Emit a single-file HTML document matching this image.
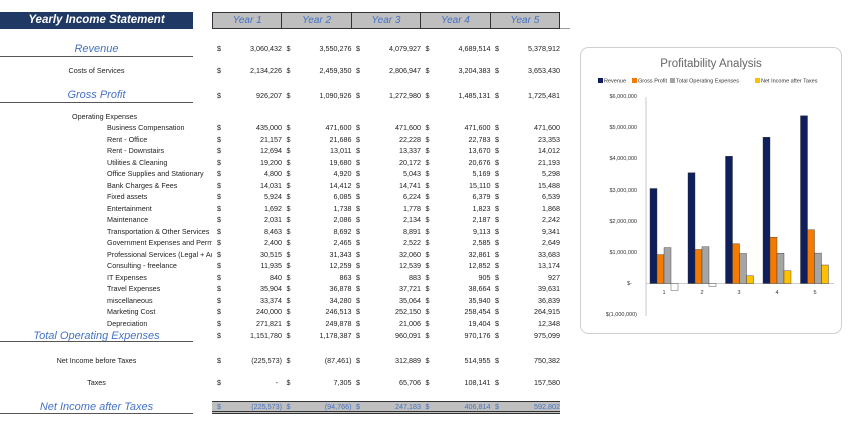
<!DOCTYPE html>
<html><head><meta charset="utf-8"><style>
*{margin:0;padding:0;box-sizing:border-box}
body{width:850px;height:440px;background:#fff;font-family:"Liberation Sans",sans-serif;position:relative;overflow:hidden;color:#222}
.r{position:absolute;left:0;width:570px;height:10px;line-height:10px;font-size:7.2px}
.r .l{position:absolute;left:107px;width:105px;white-space:nowrap;overflow:hidden}
.r .lc{position:absolute;left:0;width:193px;text-align:center}
.c{position:absolute;width:69px;height:10px}
.c b{font-weight:normal;position:absolute;left:3px}
.c i{font-style:normal;position:absolute;right:1px}
.c1{left:214px}.c2{left:283.5px}.c3{left:353px}.c4{left:422.5px}.c5{left:492px}
.big{font-style:italic;color:#4472c4;font-size:11px}
.ul{position:absolute;left:0;width:193px;height:1px;background:#555}
</style></head><body>
<div style="position:absolute;left:0;top:12px;width:193px;height:17px;background:#1f3864;color:#fff;font-style:italic;font-weight:bold;font-size:11.5px;line-height:17px;text-align:center">Yearly Income Statement</div>
<div style="position:absolute;left:212px;top:12px;width:348px;height:17px;background:#bfbfbf;border:1px solid #333;display:flex;color:#4472c4;font-style:italic;font-size:10px;line-height:15px">
<div style="flex:1;text-align:center;border-right:1px solid #333">Year 1</div><div style="flex:1;text-align:center;border-right:1px solid #333">Year 2</div><div style="flex:1;text-align:center;border-right:1px solid #333">Year 3</div><div style="flex:1;text-align:center;border-right:1px solid #333">Year 4</div><div style="flex:1;text-align:center">Year 5</div></div>
<div style="position:absolute;left:560px;top:28px;width:10px;height:1px;background:#999"></div>

<div class="r" style="top:43px;height:12px;line-height:12px"><span class="lc big">Revenue</span></div>
<div class="r" style="top:44px"><div class="c c1"><b>$</b><i>3,060,432</i></div><div class="c c2"><b>$</b><i>3,550,276</i></div><div class="c c3"><b>$</b><i>4,079,927</i></div><div class="c c4"><b>$</b><i>4,689,514</i></div><div class="c c5"><b>$</b><i>5,378,912</i></div></div>
<div class="ul" style="top:56px"></div>
<div class="r" style="top:66px"><span class="lc">Costs of Services</span><div class="c c1"><b>$</b><i>2,134,226</i></div><div class="c c2"><b>$</b><i>2,459,350</i></div><div class="c c3"><b>$</b><i>2,806,947</i></div><div class="c c4"><b>$</b><i>3,204,383</i></div><div class="c c5"><b>$</b><i>3,653,430</i></div></div>
<div class="r" style="top:89px;height:12px;line-height:12px"><span class="lc big">Gross Profit</span></div>
<div class="r" style="top:91px"><div class="c c1"><b>$</b><i>926,207</i></div><div class="c c2"><b>$</b><i>1,090,926</i></div><div class="c c3"><b>$</b><i>1,272,980</i></div><div class="c c4"><b>$</b><i>1,485,131</i></div><div class="c c5"><b>$</b><i>1,725,481</i></div></div>
<div class="ul" style="top:102px"></div>
<div class="r" style="top:112px"><span style="position:absolute;left:72px">Operating Expenses</span></div>

<div class="r" style="top:123px"><span class="l">Business Compensation</span><div class="c c1"><b>$</b><i>435,000</i></div><div class="c c2"><b>$</b><i>471,600</i></div><div class="c c3"><b>$</b><i>471,600</i></div><div class="c c4"><b>$</b><i>471,600</i></div><div class="c c5"><b>$</b><i>471,600</i></div></div>
<div class="r" style="top:134.5px"><span class="l">Rent - Office</span><div class="c c1"><b>$</b><i>21,157</i></div><div class="c c2"><b>$</b><i>21,686</i></div><div class="c c3"><b>$</b><i>22,228</i></div><div class="c c4"><b>$</b><i>22,783</i></div><div class="c c5"><b>$</b><i>23,353</i></div></div>
<div class="r" style="top:146px"><span class="l">Rent - Downstairs</span><div class="c c1"><b>$</b><i>12,694</i></div><div class="c c2"><b>$</b><i>13,011</i></div><div class="c c3"><b>$</b><i>13,337</i></div><div class="c c4"><b>$</b><i>13,670</i></div><div class="c c5"><b>$</b><i>14,012</i></div></div>
<div class="r" style="top:157.5px"><span class="l">Utilities &amp; Cleaning</span><div class="c c1"><b>$</b><i>19,200</i></div><div class="c c2"><b>$</b><i>19,680</i></div><div class="c c3"><b>$</b><i>20,172</i></div><div class="c c4"><b>$</b><i>20,676</i></div><div class="c c5"><b>$</b><i>21,193</i></div></div>
<div class="r" style="top:169px"><span class="l">Office Supplies and Stationary</span><div class="c c1"><b>$</b><i>4,800</i></div><div class="c c2"><b>$</b><i>4,920</i></div><div class="c c3"><b>$</b><i>5,043</i></div><div class="c c4"><b>$</b><i>5,169</i></div><div class="c c5"><b>$</b><i>5,298</i></div></div>
<div class="r" style="top:180.5px"><span class="l">Bank Charges &amp; Fees</span><div class="c c1"><b>$</b><i>14,031</i></div><div class="c c2"><b>$</b><i>14,412</i></div><div class="c c3"><b>$</b><i>14,741</i></div><div class="c c4"><b>$</b><i>15,110</i></div><div class="c c5"><b>$</b><i>15,488</i></div></div>
<div class="r" style="top:192px"><span class="l">Fixed assets</span><div class="c c1"><b>$</b><i>5,924</i></div><div class="c c2"><b>$</b><i>6,085</i></div><div class="c c3"><b>$</b><i>6,224</i></div><div class="c c4"><b>$</b><i>6,379</i></div><div class="c c5"><b>$</b><i>6,539</i></div></div>
<div class="r" style="top:203.5px"><span class="l">Entertainment</span><div class="c c1"><b>$</b><i>1,692</i></div><div class="c c2"><b>$</b><i>1,738</i></div><div class="c c3"><b>$</b><i>1,778</i></div><div class="c c4"><b>$</b><i>1,823</i></div><div class="c c5"><b>$</b><i>1,868</i></div></div>
<div class="r" style="top:215px"><span class="l">Maintenance</span><div class="c c1"><b>$</b><i>2,031</i></div><div class="c c2"><b>$</b><i>2,086</i></div><div class="c c3"><b>$</b><i>2,134</i></div><div class="c c4"><b>$</b><i>2,187</i></div><div class="c c5"><b>$</b><i>2,242</i></div></div>
<div class="r" style="top:226.5px"><span class="l">Transportation &amp; Other Services</span><div class="c c1"><b>$</b><i>8,463</i></div><div class="c c2"><b>$</b><i>8,692</i></div><div class="c c3"><b>$</b><i>8,891</i></div><div class="c c4"><b>$</b><i>9,113</i></div><div class="c c5"><b>$</b><i>9,341</i></div></div>
<div class="r" style="top:238px"><span class="l">Government Expenses and Permits</span><div class="c c1"><b>$</b><i>2,400</i></div><div class="c c2"><b>$</b><i>2,465</i></div><div class="c c3"><b>$</b><i>2,522</i></div><div class="c c4"><b>$</b><i>2,585</i></div><div class="c c5"><b>$</b><i>2,649</i></div></div>
<div class="r" style="top:249.5px"><span class="l">Professional Services (Legal + Acc)</span><div class="c c1"><b>$</b><i>30,515</i></div><div class="c c2"><b>$</b><i>31,343</i></div><div class="c c3"><b>$</b><i>32,060</i></div><div class="c c4"><b>$</b><i>32,861</i></div><div class="c c5"><b>$</b><i>33,683</i></div></div>
<div class="r" style="top:261px"><span class="l">Consulting - freelance</span><div class="c c1"><b>$</b><i>11,935</i></div><div class="c c2"><b>$</b><i>12,259</i></div><div class="c c3"><b>$</b><i>12,539</i></div><div class="c c4"><b>$</b><i>12,852</i></div><div class="c c5"><b>$</b><i>13,174</i></div></div>
<div class="r" style="top:272.5px"><span class="l">IT Expenses</span><div class="c c1"><b>$</b><i>840</i></div><div class="c c2"><b>$</b><i>863</i></div><div class="c c3"><b>$</b><i>883</i></div><div class="c c4"><b>$</b><i>905</i></div><div class="c c5"><b>$</b><i>927</i></div></div>
<div class="r" style="top:284px"><span class="l">Travel Expenses</span><div class="c c1"><b>$</b><i>35,904</i></div><div class="c c2"><b>$</b><i>36,878</i></div><div class="c c3"><b>$</b><i>37,721</i></div><div class="c c4"><b>$</b><i>38,664</i></div><div class="c c5"><b>$</b><i>39,631</i></div></div>
<div class="r" style="top:295.5px"><span class="l">miscellaneous</span><div class="c c1"><b>$</b><i>33,374</i></div><div class="c c2"><b>$</b><i>34,280</i></div><div class="c c3"><b>$</b><i>35,064</i></div><div class="c c4"><b>$</b><i>35,940</i></div><div class="c c5"><b>$</b><i>36,839</i></div></div>
<div class="r" style="top:307px"><span class="l">Marketing Cost</span><div class="c c1"><b>$</b><i>240,000</i></div><div class="c c2"><b>$</b><i>246,513</i></div><div class="c c3"><b>$</b><i>252,150</i></div><div class="c c4"><b>$</b><i>258,454</i></div><div class="c c5"><b>$</b><i>264,915</i></div></div>
<div class="r" style="top:318.5px"><span class="l">Depreciation</span><div class="c c1"><b>$</b><i>271,821</i></div><div class="c c2"><b>$</b><i>249,878</i></div><div class="c c3"><b>$</b><i>21,006</i></div><div class="c c4"><b>$</b><i>19,404</i></div><div class="c c5"><b>$</b><i>12,348</i></div></div>
<div class="r" style="top:330px;height:12px;line-height:12px"><span class="lc big">Total Operating Expenses</span></div>
<div class="r" style="top:331px"><div class="c c1"><b>$</b><i>1,151,780</i></div><div class="c c2"><b>$</b><i>1,178,387</i></div><div class="c c3"><b>$</b><i>960,091</i></div><div class="c c4"><b>$</b><i>970,176</i></div><div class="c c5"><b>$</b><i>975,099</i></div></div>
<div class="ul" style="top:341px"></div>
<div class="r" style="top:356px"><span class="lc">Net Income before Taxes</span><div class="c c1"><b>$</b><i>(225,573)</i></div><div class="c c2"><b>$</b><i>(87,461)</i></div><div class="c c3"><b>$</b><i>312,889</i></div><div class="c c4"><b>$</b><i>514,955</i></div><div class="c c5"><b>$</b><i>750,382</i></div></div>
<div class="r" style="top:378px"><span class="lc">Taxes</span><div class="c c1"><b>$</b><i>-&nbsp;&nbsp;</i></div><div class="c c2"><b>$</b><i>7,305</i></div><div class="c c3"><b>$</b><i>65,706</i></div><div class="c c4"><b>$</b><i>108,141</i></div><div class="c c5"><b>$</b><i>157,580</i></div></div>
<div style="position:absolute;left:212px;top:401px;width:348px;height:13px;background:#bfbfbf;border-top:1px solid #333;border-bottom:3px double #333"></div>
<div class="r" style="top:401px;height:12px;line-height:12px"><span class="lc big">Net Income after Taxes</span></div>
<div class="r" style="top:402px;color:#4472c4"><div class="c c1"><b>$</b><i>(225,573)</i></div><div class="c c2"><b>$</b><i>(94,766)</i></div><div class="c c3"><b>$</b><i>247,183</i></div><div class="c c4"><b>$</b><i>406,814</i></div><div class="c c5"><b>$</b><i>592,802</i></div></div>
<div class="ul" style="top:413px"></div>

<svg style="position:absolute;left:0;top:0" width="850" height="440" font-family="Liberation Sans, sans-serif">
<rect x="580.5" y="47.5" width="261" height="286" rx="8" fill="#fff" stroke="#d0d0d0"/>
<text x="711" y="67" text-anchor="middle" font-size="11.5" fill="#666">Profitability Analysis</text>
<g font-size="5.5" fill="#333">
<rect x="598" y="78" width="5" height="5" fill="#0f1f5c"/><text x="604" y="82.5">Revenue</text>
<rect x="632" y="78" width="5" height="5" fill="#f47a00"/><text x="638" y="82.5">Gross Profit</text>
<rect x="670" y="78" width="5" height="5" fill="#a5a5a5"/><text x="676" y="82.5">Total Operating Expenses</text>
<rect x="755" y="78" width="5" height="5" fill="#ffc000"/><text x="761" y="82.5">Net Income after Taxes</text>
</g>
<g font-size="5.5" fill="#333" text-anchor="end">
<text x="637" y="98">$6,000,000</text><text x="637" y="129">$5,000,000</text><text x="637" y="160">$4,000,000</text><text x="637" y="192">$3,000,000</text><text x="637" y="223">$2,000,000</text><text x="637" y="254">$1,000,000</text><text x="632" y="285">$-</text><text x="637" y="316">$(1,000,000)</text>
</g>
<line x1="646" y1="97" x2="646" y2="316" stroke="#bbb" stroke-width="0.8"/>
<line x1="646" y1="283.5" x2="834" y2="283.5" stroke="#bbb" stroke-width="0.8"/>
<g stroke="#333" stroke-width="0.4">
<rect x="650" y="188.5" width="7" height="95" fill="#0f1f5c"/><rect x="657" y="254.6" width="7" height="28.9" fill="#f47a00"/><rect x="664" y="247.6" width="7" height="35.9" fill="#a5a5a5"/><rect x="671" y="283.5" width="7" height="7" fill="#fff"/>
<rect x="688" y="172.7" width="7" height="110.8" fill="#0f1f5c"/><rect x="695" y="249.5" width="7" height="34" fill="#f47a00"/><rect x="702" y="246.7" width="7" height="36.8" fill="#a5a5a5"/><rect x="709" y="283.5" width="7" height="3" fill="#fff"/>
<rect x="725.5" y="156.2" width="7" height="127.3" fill="#0f1f5c"/><rect x="732.5" y="243.8" width="7" height="39.7" fill="#f47a00"/><rect x="739.5" y="253.5" width="7" height="30" fill="#a5a5a5"/><rect x="746.5" y="275.8" width="7" height="7.7" fill="#ffc000"/>
<rect x="763" y="137.2" width="7" height="146.3" fill="#0f1f5c"/><rect x="770" y="237.2" width="7" height="46.3" fill="#f47a00"/><rect x="777" y="253.2" width="7" height="30.3" fill="#a5a5a5"/><rect x="784" y="270.8" width="7" height="12.7" fill="#ffc000"/>
<rect x="800.5" y="115.7" width="7" height="167.8" fill="#0f1f5c"/><rect x="807.5" y="229.7" width="7" height="53.8" fill="#f47a00"/><rect x="814.5" y="253.1" width="7" height="30.4" fill="#a5a5a5"/><rect x="821.5" y="265" width="7" height="18.5" fill="#ffc000"/>
</g>
<g font-size="5.5" fill="#333" text-anchor="middle">
<text x="664" y="294">1</text><text x="702" y="294">2</text><text x="739" y="294">3</text><text x="777" y="294">4</text><text x="815" y="294">5</text>
</g>
</svg>
</body></html>
